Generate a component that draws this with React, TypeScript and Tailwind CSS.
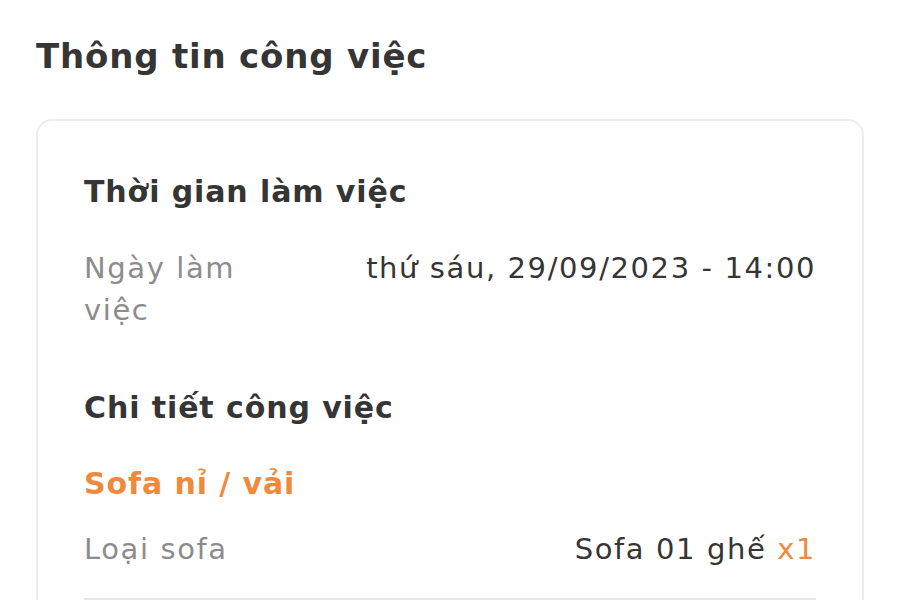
const font = { fontFamily: '"DejaVu Sans", "Noto Sans", sans-serif' }

const App = () => {
  return (
    <div
      className="min-h-[600px] w-[900px] overflow-hidden bg-white px-[36px] pt-[34px] text-[#353535]"
      style={font}
    >
      <h1 className="text-[34px] font-bold leading-[44px] tracking-[0.8px]">Thông tin công việc</h1>

      <div className="mt-[41px] rounded-[16px] border-2 border-[#ededed] px-[46px] pb-10 pt-[51px]">
        {/* Thời gian */}
        <h2 className="text-[30px] font-bold leading-[40px] tracking-[0.9px]">Thời gian làm việc</h2>
        <div className="mt-[35px] flex items-start text-[29px] leading-[42px] tracking-[1.6px]">
          <span className="w-[220px] shrink-0 text-[#8c8c8c]">Ngày làm việc</span>
          <span className="flex-1 text-right">thứ sáu, 29/09/2023 - 14:00</span>
        </div>

        {/* Chi tiết */}
        <h2 className="mt-[57px] text-[30px] font-bold leading-[40px] tracking-[0.9px]">Chi tiết công việc</h2>
        <div className="mt-[36px] text-[30px] font-bold leading-[40px] tracking-[0.9px] text-[#ef8a3c]">
          Sofa nỉ / vải
        </div>
        <div className="mt-[24px] flex items-start text-[29px] leading-[42px] tracking-[1.6px]">
          <span className="text-[#8c8c8c]">Loại sofa</span>
          <span className="flex-1 text-right">
            Sofa 01 ghế <span className="text-[#ef8a3c]">x1</span>
          </span>
        </div>
        <div className="mt-[28px] border-t-2 border-[#e6e6e6]" />
      </div>
    </div>
  )
}

export default App
